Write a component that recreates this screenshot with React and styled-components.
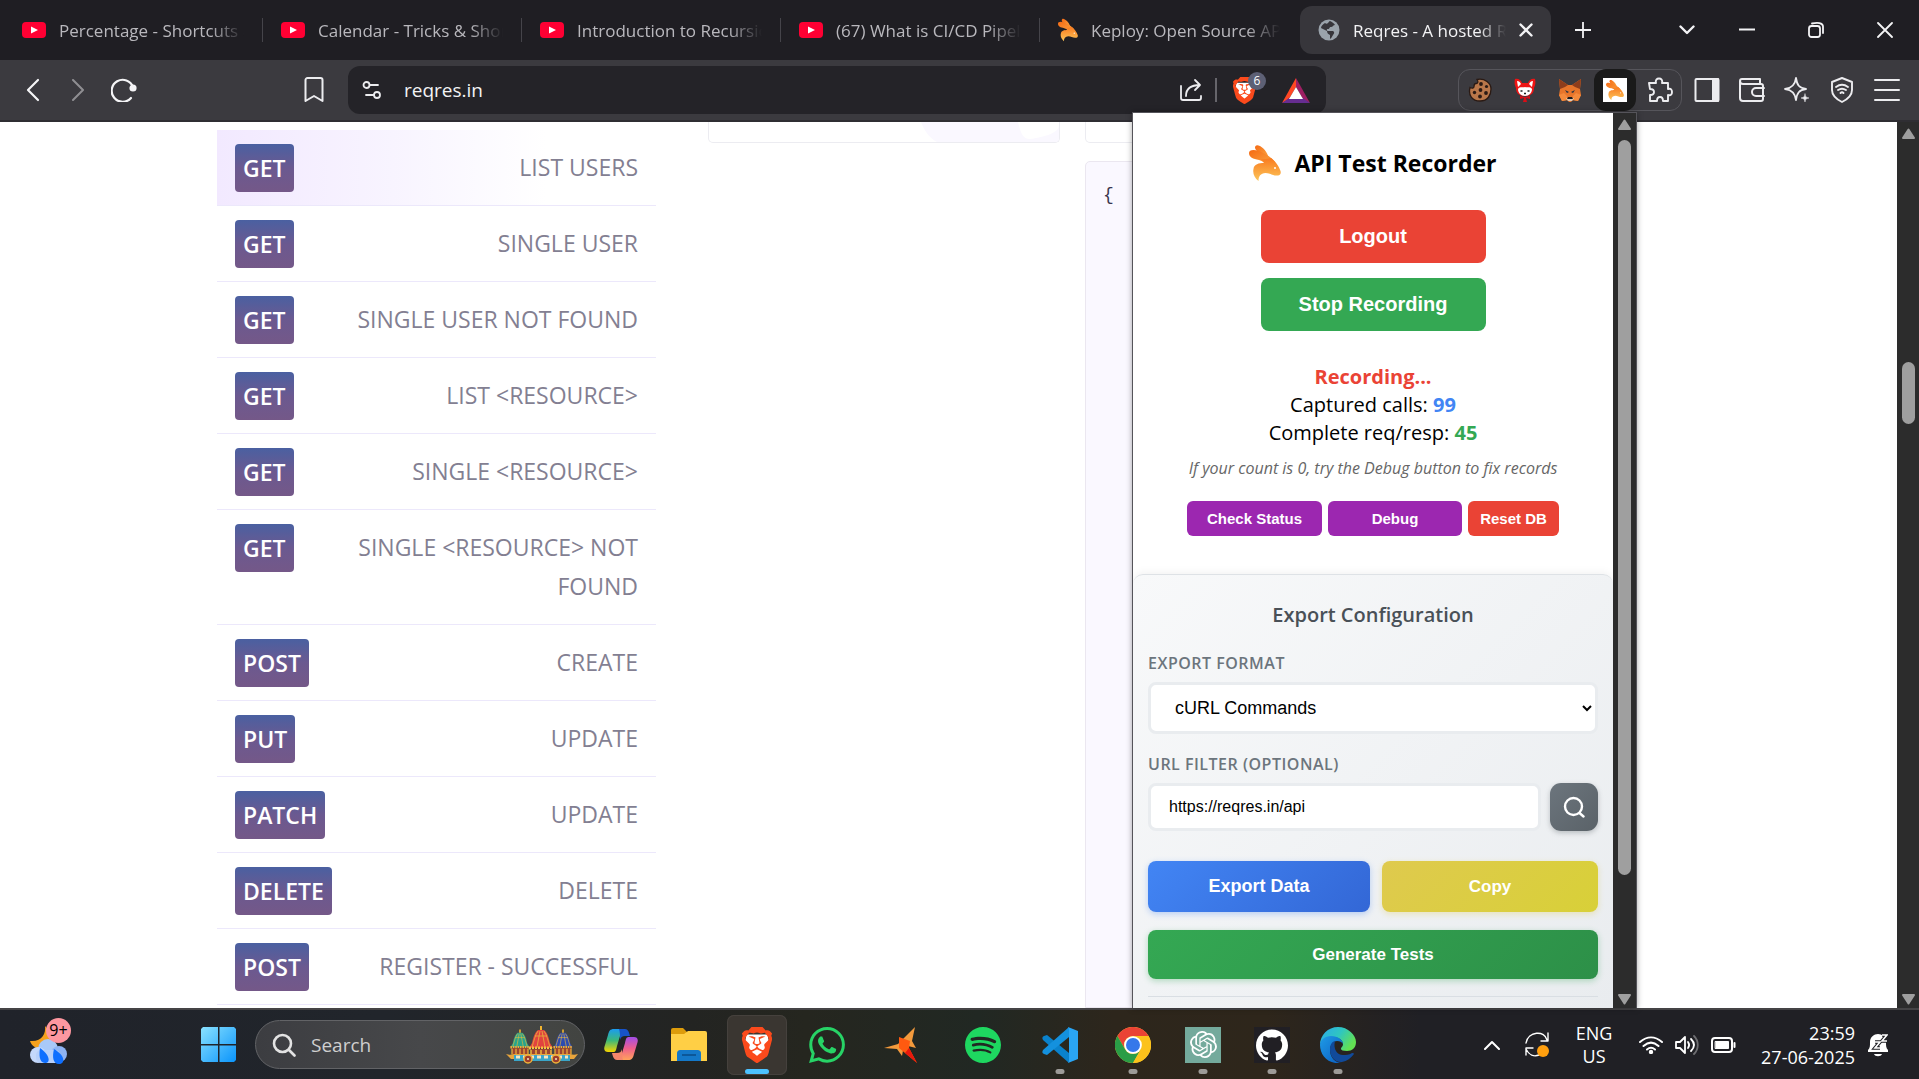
import React from "react";
import styled, { createGlobalStyle } from "styled-components";
import { SiBrave, SiOpenai, SiGithub, SiSpotify, SiWhatsapp } from "react-icons/si";

const ui = `"Segoe UI", "Open Sans", "Noto Sans", sans-serif`;
const arial = `Arial, "Liberation Sans", sans-serif`;

const GlobalStyle = createGlobalStyle`
  *, *::before, *::after { box-sizing: border-box; }
  body { margin: 0; font-family: ${ui}; background: #fff; overflow: hidden; }
  button, input, select { font: inherit; margin: 0; }
  button { border: 0; padding: 0; background: none; color: inherit; }
  svg { display: block; flex: none; }
  h1, h2, p, ul, pre { margin: 0; padding: 0; }
`;

/* ---------- shell ---------- */
const Desktop = styled.div`
  height: 100vh;
  display: flex;
  flex-direction: column;
`;
const Browser = styled.div`
  position: relative;
  flex: 1;
  min-height: 0;
  display: flex;
  flex-direction: column;
`;

/* ---------- tab strip ---------- */
const TabStrip = styled.header`
  height: 60px;
  flex: none;
  display: flex;
  align-items: center;
  padding-left: 4px;
  background: #1f1e23;
  color: #f3f3f5;
`;
const Tab = styled.button`
  width: 258px;
  height: 48px;
  display: flex;
  align-items: center;
  gap: 13px;
  padding: 0 18px;
  color: #b9b8bd;
  font-size: 17px;
  text-align: left;
`;
const TabDivider = styled.span`
  width: 1px;
  height: 24px;
  background: #45444a;
`;
const ActiveTab = styled.div`
  width: 251px;
  height: 48px;
  margin-left: 2px;
  display: flex;
  align-items: center;
  gap: 13px;
  padding: 0 18px;
  border-radius: 12px;
  background: #37363b;
  color: #f3f3f5;
  font-size: 17px;
`;
const TabTitle = styled.span`
  flex: 1;
  min-width: 0;
  overflow: hidden;
  white-space: nowrap;
  mask-image: linear-gradient(to right, #000 82%, transparent);
`;
const IconButton = styled.button`
  display: flex;
  align-items: center;
  justify-content: center;
`;
const NewTab = styled(IconButton)`
  width: 64px;
  height: 48px;
`;
const WindowControls = styled.div`
  margin-left: auto;
  display: flex;
`;
const WindowButton = styled(IconButton)`
  width: 69px;
  height: 48px;
`;
const TabMenu = styled(WindowButton)`
  width: 50px;
`;

/* ---------- toolbar ---------- */
const Toolbar = styled.nav`
  height: 62px;
  flex: none;
  display: flex;
  align-items: center;
  padding: 0 19px 0 21px;
  background: #3b3a3f;
  border-bottom: 2px solid #2f2e33;
  color: #ececef;
`;
const NavGroup = styled.div`
  display: flex;
  gap: 21px;
  color: #f5f5f7;
`;
const BookmarkButton = styled(IconButton)`
  margin: 0 24px 0 167px;
`;
const AddressBar = styled.div`
  flex: 0 1 978px;
  height: 48px;
  display: flex;
  align-items: center;
  padding: 0 16px 0 14px;
  border-radius: 12px;
  background: #242328;
`;
const Address = styled.input`
  flex: 1;
  min-width: 0;
  margin: 0 16px 0 22px;
  padding: 0;
  border: 0;
  outline: 0;
  background: transparent;
  color: #f3f3f5;
  font-size: 19px;
`;
const AddressDivider = styled.span`
  width: 2px;
  height: 24px;
  margin: 0 16px 0 12px;
  background: #66656b;
`;
const ShieldButton = styled(IconButton)`
  position: relative;
  margin-right: 26px;
`;
const ShieldBadge = styled.span`
  position: absolute;
  left: 15px;
  top: -5px;
  min-width: 18px;
  height: 18px;
  border-radius: 9px;
  background: #5d6075;
  color: #fff;
  font-size: 12px;
  line-height: 18px;
  text-align: center;
`;
const Extensions = styled.div`
  height: 42px;
  margin-left: auto;
  display: flex;
  align-items: center;
  gap: 3px;
  border: 1px solid #56555b;
  border-radius: 12px;
`;
const Extension = styled(IconButton)`
  width: 42px;
  height: 42px;
  border-radius: 12px;
  background: ${(p) => (p.$active ? "#1a1a1a" : "transparent")};
`;
const RabbitChip = styled.span`
  width: 24px;
  height: 24px;
  display: flex;
  align-items: center;
  justify-content: center;
  background: #fff;
`;
const ToolbarEnd = styled.div`
  display: flex;
  align-items: center;
  gap: 19px;
  margin-left: 12px;
`;

/* ---------- page ---------- */
const Page = styled.main`
  flex: 1;
  min-height: 0;
  display: flex;
  overflow: hidden;
  background: #fff;
`;
const PageBody = styled.div`
  flex: 1;
  min-width: 0;
  padding: 0 265px 0 217px;
  display: grid;
  grid-template-columns: 491fr 377fr 547fr;
`;
const EndpointList = styled.ul`
  list-style: none;
  margin-right: 52px;
  padding-top: 8px;
`;
const EndpointRow = styled.li`
  display: flex;
  justify-content: space-between;
  gap: 50px;
  padding: 18px;
  border-bottom: 1px solid #ece8fb;
  font-size: 23px;
  line-height: 39px;
  background: ${(p) => (p.$active ? "linear-gradient(90deg, #f2e9ff, #f8f4ff 40%, #fff 75%)" : "none")};
`;
const Method = styled.span`
  align-self: flex-start;
  margin: -4px 0 -5px;
  padding: 0 8px;
  border-radius: 4px;
  background: linear-gradient(#4a60a1, #6b5990 50%, #745888);
  color: #fff;
  font-weight: 600;
  line-height: 48px;
`;
const EndpointLink = styled.a`
  color: #837f92;
  text-align: right;
  text-decoration: none;
`;
const Outlined = styled.div`
  height: 21px;
  margin-right: ${(p) => (p.$gap ? "25px" : "0")};
  border: 1px solid #ececf1;
  border-top: 0;
  border-radius: 0 0 5px 5px;
  display: flex;
  justify-content: flex-end;
  overflow: hidden;
`;
const ResponseColumn = styled.div`
  display: flex;
  flex-direction: column;
  gap: 18px;
`;
const Response = styled.pre`
  flex: 1;
  padding: 20px 17px;
  border: 1px solid #ebe7f0;
  border-radius: 5px 5px 0 0;
  background: #faf8ff;
  color: #3a3650;
  font: 18px/26px "Liberation Mono", monospace;
`;

/* ---------- scroll bars ---------- */
const ScrollTrack = styled.div`
  width: ${(p) => p.$width}px;
  flex: none;
  display: flex;
  flex-direction: column;
  align-items: center;
  padding: 6px 0 3px;
  background: #2c2c2c;
`;
const ScrollLane = styled.div`
  flex: 1;
  margin: 9px 0;
  display: grid;
  grid-template-rows: ${(p) => p.$rows};
`;
const ScrollThumb = styled.div`
  grid-row: 2;
  width: 13px;
  border-radius: 7px;
  background: #9f9f9f;
`;

/* ---------- extension popup ---------- */
const Popup = styled.aside`
  position: absolute;
  top: 112px;
  right: 282px;
  bottom: 0;
  width: 505px;
  display: flex;
  border: 1px solid #55545a;
  border-bottom: 0;
  background: #fff;
  box-shadow: 0 0 6px rgba(0, 0, 0, 0.35);
`;
const PopupBody = styled.div`
  flex: 1;
  display: flex;
  flex-direction: column;
  overflow: hidden;
  color: #000;
`;
const Brand = styled.div`
  height: 37px;
  margin-top: 31px;
  display: flex;
  align-items: center;
  justify-content: center;
  gap: 13px;
`;
const BrandTitle = styled.h1`
  font-size: 23px;
  line-height: 32px;
  font-weight: 700;
`;
const MainActions = styled.div`
  margin-top: 29px;
  display: flex;
  flex-direction: column;
  align-items: center;
  gap: 15px;
`;
const PrimaryButton = styled.button`
  width: 225px;
  height: 53px;
  border-radius: 8px;
  background: ${(p) => p.$color};
  color: #fff;
  font: bold 20px ${arial};
`;
const Status = styled.div`
  margin-top: 32px;
  text-align: center;
  font-size: 20px;
  line-height: 28px;
`;
const Strong = styled.strong`
  color: ${(p) => p.$color};
`;
const Hint = styled.p`
  margin-top: 9px;
  color: #666;
  font-size: 16px;
  line-height: 24px;
  font-style: italic;
  text-align: center;
`;
const ToolButtons = styled.div`
  width: 372px;
  margin: 21px auto 38px;
  display: grid;
  grid-template-columns: 135fr 134fr 91fr;
  gap: 6px;
`;
const ToolButton = styled.button`
  height: 35px;
  border-radius: 6px;
  background: ${(p) => p.$color};
  color: #fff;
  font: bold 15px ${arial};
`;
const ExportSection = styled.section`
  flex: 1;
  display: flex;
  flex-direction: column;
  padding: 24px 15px 0;
  border-top: 1px solid #dee2e6;
  border-radius: 10px 10px 0 0;
  background: linear-gradient(135deg, #f8f9fa, #e9ecef);
  box-shadow: 0 -2px 8px rgba(0, 0, 0, 0.05);
`;
const SectionTitle = styled.h2`
  color: #495057;
  font-size: 20px;
  line-height: 32px;
  font-weight: 600;
  text-align: center;
`;
const FieldLabel = styled.label`
  margin-top: ${(p) => p.$top}px;
  color: #6c757d;
  font-size: 16px;
  line-height: 24px;
  font-weight: 600;
  letter-spacing: 0.5px;
`;
const FormatSelect = styled.select`
  height: 52px;
  margin-top: 7px;
  padding: 0 0 0 20px;
  border: 3px solid #e9ecef;
  border-radius: 8px;
  background: #fff;
  color: #000;
  font: 18px ${arial};
`;
const FilterRow = styled.div`
  margin-top: 7px;
  display: flex;
  gap: 9px;
`;
const FilterInput = styled.input`
  flex: 1;
  min-width: 0;
  height: 48px;
  padding: 0 18px;
  border: 3px solid #e9ecef;
  border-radius: 8px;
  background: #fff;
  color: #000;
  font: 16px ${arial};
`;
const SearchButton = styled(IconButton)`
  width: 48px;
  height: 48px;
  border-radius: 11px;
  background: linear-gradient(135deg, #6c757d, #5a6268);
  color: #fff;
  box-shadow: 0 2px 5px rgba(90, 98, 104, 0.35);
`;
const ExportActions = styled.div`
  margin: 30px 0 18px;
  display: grid;
  grid-template-columns: 222fr 216fr;
  gap: 12px;
`;
const GradientButton = styled.button`
  height: ${(p) => p.$height}px;
  border-radius: 8px;
  background: linear-gradient(135deg, ${(p) => p.$from}, ${(p) => p.$to});
  color: #fff;
  font: bold ${(p) => p.$size}px ${arial};
  box-shadow: 0 2px 6px ${(p) => p.$from}55;
`;
const SectionRule = styled.hr`
  width: 100%;
  margin: 17px 0 0;
  border: 0;
  border-top: 1px solid #d9dee3;
`;

/* ---------- taskbar ---------- */
const Taskbar = styled.footer`
  height: 71px;
  flex: none;
  display: flex;
  align-items: center;
  padding: 0 31px 0 30px;
  border-top: 2px solid #454446;
  background: linear-gradient(90deg, #20232a 0, #21252b 20%, #232422 36%, #25261f 42%, #212823 51%, #2d261c 58%, #2e261b 66%, #202025 74%);
  color: #fff;
`;
const Weather = styled(IconButton)`
  position: relative;
  width: 37px;
  height: 38px;
`;
const WeatherBadge = styled.span`
  position: absolute;
  left: 16px;
  top: -8px;
  width: 25px;
  height: 25px;
  border-radius: 50%;
  background: #fd97a0;
  color: #000;
  font-size: 16px;
  line-height: 25px;
  text-align: center;
`;
const StartButton = styled(IconButton)`
  margin: 0 19px 0 134px;
`;
const SearchBox = styled.label`
  width: 330px;
  height: 49px;
  display: flex;
  align-items: center;
  gap: 15px;
  padding: 0 6px 0 16px;
  border: 1px solid #626366;
  border-radius: 25px;
  background: linear-gradient(90deg, #3c3d41, #47484a 50%, #424441);
`;
const SearchInput = styled.input`
  flex: 1;
  min-width: 0;
  padding: 0;
  border: 0;
  outline: 0;
  background: transparent;
  font-size: 19px;
  &::placeholder { color: #cfcfcf; opacity: 1; }
`;
const AppRow = styled.div`
  display: flex;
  margin-left: 6px;
`;
const AppTile = styled.button`
  position: relative;
  width: 60px;
  height: 60px;
  margin-left: ${(p) => p.$gap}px;
  display: flex;
  align-items: center;
  justify-content: center;
  border-radius: 7px;
  background: ${(p) => (p.$focused ? "#3a3631" : "transparent")};
  box-shadow: ${(p) => (p.$focused ? "inset 0 0 0 1px #45413d" : "none")};
`;
const Running = styled.span`
  position: absolute;
  left: 50%;
  bottom: 1px;
  width: ${(p) => (p.$focused ? 24 : 9)}px;
  height: 5px;
  transform: translateX(-50%);
  border-radius: 3px;
  background: ${(p) => (p.$focused ? "#4cc2ff" : "#9d9b98")};
`;
const Tray = styled.div`
  margin-left: auto;
  display: flex;
  align-items: center;
  gap: 25px;
`;
const TrayIcons = styled.div`
  display: flex;
  align-items: center;
  gap: 12px;
`;
const Language = styled.div`
  width: 40px;
  font-size: 18px;
  line-height: 23px;
  text-align: center;
`;
const Clock = styled.div`
  display: flex;
  align-items: center;
  gap: 13px;
`;
const ClockText = styled.div`
  min-width: 92px;
  font-size: 18px;
  line-height: 24px;
  text-align: right;
  white-space: nowrap;
`;

/* ---------- drawings ---------- */
const Line = ({ w, h, box, sw = 2, children, ...rest }) => (
  <svg width={w} height={h} viewBox={box || `0 0 ${w} ${h}`} fill="none" stroke="currentColor" strokeWidth={sw} strokeLinecap="round" strokeLinejoin="round" aria-hidden="true" {...rest}>
    {children}
  </svg>
);
const Art = ({ w, h, box, children }) => (
  <svg width={w} height={h} viewBox={box || `0 0 ${w} ${h}`} aria-hidden="true">{children}</svg>
);
const YouTube = () => (
  <Art w={24} h={16}><rect width="24" height="16" rx="4" fill="#ff0033" /><path d="M9 4.500 16 8 9 11.500Z" fill="#fff" /></Art>
);
const Rabbit = ({ w, h, id }) => (
  <Art w={w} h={h} box="0 0 32 36">
    <defs><linearGradient id={id} x1="0" y1="0" x2="0" y2="1"><stop offset="0" stopColor="#f97a1f" /><stop offset="1" stopColor="#fcc65a" /></linearGradient>
      <linearGradient id={`${id}-e`} x1="0" y1="0" x2="1" y2="1"><stop offset="0" stopColor="#f56a14" /><stop offset="1" stopColor="#fbaa45" /></linearGradient></defs>
    <path d="M6 3C6 0 8-.5 11 1c5 3 8 8 9 13C15 11 7 7 6 3Z" fill={`url(#${id}-e)`} />
    <path d="M0 8C0 5 4 4 10 6c7 3 12 6 16 11l-9 3c-2-3-4-4-7-5C4 14 0 12 0 8Z" fill={`url(#${id}-e)`} />
    <path d="M15 18c-1-2-2-3-4-4 5 1 9-1 11-1 4 3 8 8 9.500 13 1 3.500-1 4.500-4 4.500-4 0-7-2.500-11-2.500-5 .5-7 3-7 8-4-3-6-8-5-12C5 19 10 18 15 18Z" fill={`url(#${id})`} />
    <circle cx="26" cy="23" r="1" fill="#fff" />
  </Art>
);
const Globe = () => (
  <Art w={22} h={22}><circle cx="11" cy="11" r="10.500" fill="#9aa3ab" /><path d="M12 2c2 1 4 2 5 4-2 0-2 2-4 2s-1 2-3 2-1 2 0 2h5c2 1 1 3 0 4s-1 3-3 4v-4c-2-1-3-2-3-4L3 9c0-2 2-4 4-5 1 1 2 1 3 0s1-2 2-2Z" fill="#37363b" /></Art>
);
const BraveShield = ({ w, h }) => (
  <svg width={w} height={h} viewBox="2 0 20 24" preserveAspectRatio="none" aria-hidden="true">
    <path d="M5 5h14l1 5-3 7-5 4-5-4-3-7Z" fill="#fff" />
    <SiBrave x="0" y="0" width="24" height="24" size={24} color="#fb4a1c" />
  </svg>
);
const Triangle = () => (
  <Art w={28} h={25}><path d="M14 0v9L7 21 0 25Z" fill="#ff4724" /><path d="M14 0v9l7 12 7 4Z" fill="#9e1f63" /><path d="M0 25l7-5h14l7 5Z" fill="#662d91" /><path d="M14 9l7 12H7Z" fill="#fff" /></Art>
);
const Cookie = () => (
  <Art w={24} h={24}><path d="M9 1.500c2 3 0 4-1 4s-2 1-2 3-2 2-4 1C0 17 4 23 12 23s11-6 11-12S17 0 9 1.500Z" fill="#b9774a" stroke="#2a1a14" strokeWidth="1.300" /><g fill="#2a1a14"><circle cx="13" cy="6" r="1.900" /><circle cx="18.500" cy="8.500" r="1.600" /><circle cx="12.500" cy="12" r="1.900" /><circle cx="18" cy="15" r="1.900" /><circle cx="12" cy="18.500" r="1.900" /><circle cx="6.500" cy="14.500" r="1.700" /></g></Art>
);
const RedFox = () => (
  <Art w={22} h={24}><path d="M1 1c3-1 6 1 7 4h6c1-3 4-5 7-4 1 4 0 7-1 9 0 6-4 8-9 8s-9-2-9-8C1 8 0 5 1 1Z" fill="#ee1414" /><path d="M3 3c2 0 3 1 4 3L4 9ZM19 3c-2 0-3 1-4 3l3 3Z" fill="#fff" /><path d="M4 11c2-3 5-1 7-2 2 1 5-1 7 2 0 4-3 7-7 7s-7-3-7-7Z" fill="#fff" /><path d="M6.500 13h2M13.500 13h2M10 15.500h2" stroke="#222" strokeWidth="1.400" /><path d="M6 18l5 1 5-1v3l-4-1 1 4H9l1-4-4 1Z" fill="#d90d16" /></Art>
);
const MetaFox = () => (
  <Art w={24} h={24}><path d="M1 1l9 6h4l9-6-1 10 1 6-3 6-5-1-2 2h-2l-2-2-5 1-3-6 1-6Z" fill="#e8752b" /><path d="M1 1l9 6-3 2-5 2ZM23 1l-9 6 3 2 5 2Z" fill="#8e3d1c" /><path d="M1 17l5-2 3 3 1 4-6 1ZM23 17l-5-2-3 3-1 4 6 1Z" fill="#f58a3c" /><path d="M7 12l4 2-2 1ZM17 12l-4 2 2 1Z" fill="#253345" /><path d="M8 20h8l-2 3h-4Z" fill="#d9c9ba" /><path d="M10 19h4l1 2H9Z" fill="#1d1a1c" /></Art>
);
const Arrow = ({ down }) => (
  <Art w={15} h={12}><path d={down ? "M2 2h11L7.500 10.500Z" : "M2 10h11L7.500 1.500Z"} fill="#9f9f9f" stroke="#9f9f9f" strokeWidth="2" strokeLinejoin="round" /></Art>
);
const Scrollbar = ({ width, rows }) => (
  <ScrollTrack $width={width} aria-hidden="true"><Arrow /><ScrollLane $rows={rows}><ScrollThumb /></ScrollLane><Arrow down /></ScrollTrack>
);
const WeatherArt = () => (
  <Art w={37} h={38}><path d="M15 0c1 8-3 16-15 15 2 6 8 9 14 7 6-3 8-8 6-16Z" fill="#f5a11d" /><circle cx="18" cy="23" r="10" fill="#a9c9f8" /><circle cx="8" cy="29" r="8" fill="#c4d8fb" /><circle cx="29" cy="28" r="8" fill="#8fb4f3" /><rect x="6" y="24" width="24" height="13" rx="5" fill="#b7d0fa" /><path d="M10 22c-1 6-1 15 5 15s5-8-5-15ZM24 23c-2 8-1 15 5 15s7-8-5-15Z" fill="#0f6fff" /></Art>
);
const WindowsArt = () => (
  <Art w={35} h={35}><defs><linearGradient id="win" x1="0" y1="0" x2="1" y2="1"><stop stopColor="#8ae2ff" /><stop offset="1" stopColor="#0a94fb" /></linearGradient></defs><path d="M2 0h15v17H0V2ZM18.500 0H33l2 2v15H18.500ZM0 18.500h17V35H2l-2-2ZM18.500 18.500H35V33l-2 2H18.500Z" fill="url(#win)" /></Art>
);
const Cart = ({ x, y, s, color, trim }) => (
  <g transform={`translate(${x} ${y}) scale(${s})`}>
    <path d="M0-3v5" stroke="#f3b52f" strokeWidth="2" />
    <path d="M-3 1h6c4 3 5 9 6 13l3 5h-24l3-5c1-4 2-10 6-13Z" fill={color} />
    <path d="M-3 2c-3 4-4 10-6 16M-1 2l-3 16M1 2l3 16M3 2c3 4 4 10 6 16M-6 7H6" stroke="#e7b53b" strokeWidth=".8" fill="none" />
    <path d="M-12 19h24" stroke={trim} strokeWidth="3" strokeDasharray="2 1" />
    <path d="M-10 20h20v8h-20Z" fill="#9b4530" /><path d="M-10 21v7M-5 21v7M0 21v7M5 21v7M10 21v7" stroke="#f0b43a" strokeWidth="1.500" />
  </g>
);
const TempleArt = () => (
  <Art w={72} h={38}>
    <Cart x={14} y={6} s={0.8} color="#27a58c" trim="#f0a93a" />
    <Cart x={57} y={6} s={0.8} color="#2c4bb0" trim="#f0a93a" />
    <Cart x={35} y={3} s={1} color="#e2433f" trim="#f5c443" />
    <path d="M0 28c3 1 5 1 8 0h56c3 1 5 1 8 0l-4 5H5Z" fill="#e8a53c" /><path d="M8 29h56v6H8Z" fill="#3aa5c8" /><path d="M10 31h52" stroke="#f7e5c0" strokeWidth="3" strokeDasharray="4 3" />
    {[22, 50].map((x) => <g key={x}><circle cx={x} cy="33" r="4" fill="#9c3d2d" stroke="#f0b43a" strokeWidth="1.500" /><circle cx={x} cy="33" r="1" fill="#f7e5c0" /></g>)}
  </Art>
);
const Copilot = () => (
  <Art w={34} h={31}>
    <defs><linearGradient id="c1" x1="0" y1="0" x2="0" y2="1"><stop stopColor="#1b9cf0" /><stop offset=".5" stopColor="#3cb879" /><stop offset="1" stopColor="#f6d400" /></linearGradient><linearGradient id="c2" x1="0" y1="0" x2="0" y2="1"><stop stopColor="#a24de8" /><stop offset=".5" stopColor="#ef5f8c" /><stop offset="1" stopColor="#ffa35a" /></linearGradient></defs>
    <path d="M18 0h-8C6 0 5 2 4 6L1 16c-2 5 0 7 3 7h5c3 0 3-2 4-6l3-10c1-3 2-3 4-3Z" fill="url(#c1)" />
    <path d="M15 0h6c3 0 4 3 5 7h-5c-3 0-4 1-5 4 0-5 0-8-1-11Z" fill="#1753c9" />
    <path d="M16 31h8c4 0 5-2 6-6l3-10c2-5 0-7-3-7h-5c-3 0-3 2-4 6l-3 10c-1 3-2 3-4 3Z" fill="url(#c2)" />
    <path d="M19 31h-6c-3 0-4-3-5-7h5c3 0 4-1 5-4 0 5 0 8 1 11Z" fill="#f5866c" />
  </Art>
);
const Folder = () => (
  <Art w={36} h={33}><path d="M0 2a2 2 0 0 1 2-2h10l4 4h18v8H0Z" fill="#dd9c0b" /><path d="M0 6h13l4-3h17a2 2 0 0 1 2 2v28H0Z" fill="#ffcf45" /><path d="M6 33v-7c0-3 1-4 4-4h16c3 0 4 1 4 4v7Z" fill="#1478c8" /><path d="M11 27h14" stroke="#0a4d88" strokeWidth="1.500" /></Art>
);
const Dart = () => (
  <Art w={34} h={36}><path d="M0 21l14-4L31 0l-3 14 4 7-12-3-2 11-5-7Z" fill="#f39a3c" /><path d="M15 10l11 4-1 7 8 15-12-10-6-5Z" fill="#ff5a10" /><path d="M25 21l8 15-12-10Z" fill="#e8180c" /></Art>
);
const VSCode = () => (
  <Art w={36} h={36}><path d="M2 9l3-1 22 18v10L1 13c-1-2-1-3 1-4Z" fill="#0a82cc" /><path d="M2 27l3 1L27 10V0L1 23c-1 2-1 3 1 4Z" fill="#1491de" /><path d="M26 0l10 4v28l-10 4c1-1 1-2 1-4V4c0-2 0-3-1-4Z" fill="#2aa5f4" /></Art>
);
const Chrome = () => (
  <Art w={36} h={36}><circle cx="18" cy="18" r="18" fill="#fcc934" /><path d="M2.400 9A18 18 0 0 1 33.600 9H18a9 9 0 0 0-7.800 13.500Z" fill="#ea4335" /><path d="M2.400 9l7.800 13.500A9 9 0 0 0 25.800 22.500L18 36A18 18 0 0 1 2.400 9Z" fill="#2a9d46" /><path d="M33.600 9H18a9 9 0 0 1 7.800 13.500L18 36A18 18 0 0 0 33.600 9Z" fill="#fcc21b" /><circle cx="18" cy="18" r="8.800" fill="#fff" /><circle cx="18" cy="18" r="7" fill="#3578ea" /></Art>
);
const IconTile = styled.span`
  width: 36px;
  height: 36px;
  display: flex;
  align-items: center;
  justify-content: center;
  background: ${(p) => p.$color};
`;
const Edge = () => (
  <Art w={36} h={36}><defs><linearGradient id="ed" x1="0" y1="0" x2="1" y2=".5"><stop stopColor="#2aa7ee" /><stop offset=".55" stopColor="#2fc6c0" /><stop offset="1" stopColor="#63e052" /></linearGradient><linearGradient id="eb" x1="0" y1="0" x2="1" y2="1"><stop stopColor="#1f9be6" /><stop offset="1" stopColor="#0a5cc0" /></linearGradient></defs>
    <path d="M0 18C0 8 8 0 18 0s18 8 18 15c0 6-4 9-9 9-4 0-6-1-6-2 0-2 2-2 2-5 0-4-5-7-10-7S1 13 0 18Z" fill="url(#ed)" /><path d="M0 18c0-5 5-9 11-9 7 0 12 4 12 8-1-2-3-3-6-3-4 0-7 4-7 9 0 7 5 13 12 13C8 38 0 28 0 18Z" fill="url(#eb)" /><path d="M15 14c-4 1-5 5-5 9 0 7 6 13 12 12 5-1 9-4 12-8 0-1-1-1-2-1-3 2-6 2-9 2-6 0-10-6-8-14Z" fill="#114a9a" /></Art>
);

const tabs = [
  ["youtube", "Percentage - Shortcuts & Tricks"],
  ["youtube", "Calendar - Tricks & Shortcuts"],
  ["youtube", "Introduction to Recursion"],
  ["youtube", "(67) What is CI/CD Pipeline"],
  ["keploy", "Keploy: Open Source API Testing"],
];
const endpoints = [
  ["GET", "LIST USERS"],
  ["GET", "SINGLE USER"],
  ["GET", "SINGLE USER NOT FOUND"],
  ["GET", "LIST <RESOURCE>"],
  ["GET", "SINGLE <RESOURCE>"],
  ["GET", "SINGLE <RESOURCE> NOT FOUND"],
  ["POST", "CREATE"],
  ["PUT", "UPDATE"],
  ["PATCH", "UPDATE"],
  ["DELETE", "DELETE"],
  ["POST", "REGISTER - SUCCESSFUL"],
];
const apps = [
  { name: "Copilot", gap: 0, icon: <Copilot /> },
  { name: "File Explorer", gap: 8, icon: <Folder /> },
  { name: "Brave", gap: 8, icon: <BraveShield w={30} h={36} />, focused: true },
  { name: "WhatsApp", gap: 10, icon: <SiWhatsapp size={36} color="#27d366" /> },
  { name: "Dart", gap: 14, icon: <Dart /> },
  { name: "Spotify", gap: 22, icon: <SiSpotify size={36} color="#1ed760" /> },
  { name: "Visual Studio Code", gap: 17, icon: <VSCode />, running: true },
  { name: "Chrome", gap: 13, icon: <Chrome />, running: true },
  { name: "ChatGPT", gap: 10, icon: <IconTile $color="#74aa9c"><SiOpenai size={27} color="#fff" /></IconTile>, running: true },
  { name: "GitHub", gap: 9, icon: <IconTile $color="#211f24"><SiGithub size={32} color="#fff" /></IconTile>, running: true },
  { name: "Edge", gap: 6, icon: <Edge />, running: true },
];

function BrowserTabs() {
  return (
    <TabStrip>
      {tabs.map(([icon, title]) => (
        <React.Fragment key={title}>
          <Tab>{icon === "youtube" ? <YouTube /> : <Rabbit w={20} h={24} id="tab-rabbit" />}<TabTitle>{title}</TabTitle></Tab>
          {icon === "youtube" && <TabDivider />}
        </React.Fragment>
      ))}
      <ActiveTab><Globe /><TabTitle>Reqres - A hosted REST-API</TabTitle>
        <IconButton aria-label="Close tab"><Line w={14} h={14} sw={2.4}><path d="M1.500 1.500l11 11M12.500 1.500l-11 11" /></Line></IconButton>
      </ActiveTab>
      <NewTab aria-label="New tab"><Line w={16} h={16} sw={1.800}><path d="M8 0v16M0 8h16" /></Line></NewTab>
      <WindowControls>
        <TabMenu aria-label="Tab list"><Line w={16} h={10} sw={2.400}><path d="M1.500 1.500L8 8l6.500-6.500" /></Line></TabMenu>
        <WindowButton aria-label="Minimize"><Line w={16} h={16} strokeLinecap="butt"><path d="M0 7.500h16" /></Line></WindowButton>
        <WindowButton aria-label="Restore"><Line w={16} h={16} sw={1.800}><rect x="1" y="4" width="11" height="11" rx="2.500" /><path d="M4 1.500c5-1 11-1 11 3V11" /></Line></WindowButton>
        <WindowButton aria-label="Close"><Line w={16} h={16} sw={1.800}><path d="M1 1l14 14M15 1L1 15" /></Line></WindowButton>
      </WindowControls>
    </TabStrip>
  );
}

function BrowserToolbar() {
  return (
    <Toolbar>
      <NavGroup>
        <IconButton aria-label="Back"><Line w={24} h={24} sw={2.200}><path d="M17 2L7 12l10 10" /></Line></IconButton>
        <IconButton aria-label="Forward"><Line w={24} h={24} opacity=".45"><path d="M7 2l10 10L7 22" /></Line></IconButton>
        <IconButton aria-label="Reload"><Line w={26} h={24} sw={2.200}><path d="M22 9A11 11 0 1 0 20 20" /><circle cx="22" cy="10" r="2.500" fill="currentColor" /></Line></IconButton>
      </NavGroup>
      <BookmarkButton aria-label="Bookmark"><Line w={20} h={26}><path d="M1.500 3a2 2 0 0 1 2-2h13a2 2 0 0 1 2 2v21L10 19l-8.500 5Z" /></Line></BookmarkButton>
      <AddressBar>
        <Line w={20} h={18} sw={1.800}><circle cx="4.500" cy="4" r="3" /><path d="M8 4h8M4 14h8" /><circle cx="15" cy="14" r="3" /></Line>
        <Address aria-label="Address" defaultValue="reqres.in" />
        <IconButton aria-label="Share"><Line w={24} h={24} sw={1.800}><path d="M2 8v12a2 2 0 0 0 2 2h16a2 2 0 0 0 2-2v-2M7 18c0-7 5-11 14-11M16 2l5 5-5 5" /></Line></IconButton>
        <AddressDivider />
        <ShieldButton aria-label="Shields"><BraveShield w={23} h={27} /><ShieldBadge>6</ShieldBadge></ShieldButton>
        <IconButton aria-label="Rewards"><Triangle /></IconButton>
      </AddressBar>
      <Extensions>
        <Extension aria-label="Cookies"><Cookie /></Extension>
        <Extension aria-label="Fox"><RedFox /></Extension>
        <Extension aria-label="MetaMask"><MetaFox /></Extension>
        <Extension $active aria-label="API Test Recorder"><RabbitChip><Rabbit w={18} h={22} id="chip-rabbit" /></RabbitChip></Extension>
        <Extension aria-label="Extensions"><Line w={26} h={26} sw={1.900}><path d="M2 6h7c-1-3 1-4.500 3-4.500S16 3 15 6h6v6c3-1 4 1 4 3s-1 4-4 3v6h-5c0-3-1-4-3-4s-3 1-3 4H3v-6c3 0 4-1 4-3s-2-3-4-3Z" /></Line></Extension>
      </Extensions>
      <ToolbarEnd>
        <IconButton aria-label="Sidebar"><Line w={26} h={24}><rect x="1.500" y="1" width="23" height="22" rx="1" /><path d="M19 1h5v22h-5Z" fill="currentColor" /></Line></IconButton>
        <IconButton aria-label="Wallet"><Line w={26} h={24}><path d="M1 3v17a3 3 0 0 0 3 3h18a2 2 0 0 0 2-2V8a2 2 0 0 0-2-2H4a3 3 0 0 1-3-3 2 2 0 0 1 2-2h18v5M25 10h-8a3.500 3.500 0 0 0 0 8h8" /></Line></IconButton>
        <IconButton aria-label="Leo AI"><Line w={26} h={26} sw={1.800}><path d="M12 1c1 7 3 10 10 11-7 1-9 4-10 11-1-7-4-10-11-11 7-1 10-4 11-11Z" /><path d="M21 17c.5 3 1 3.500 4 4-3 .5-3.500 1-4 4-.5-3-1-3.500-4-4 3-.5 3.500-1 4-4Z" fill="currentColor" strokeWidth=".5" /></Line></IconButton>
        <IconButton aria-label="VPN"><Line w={26} h={26} box="-1 0 26 26" sw={1.900}><path d="M12 1l10 4v8c0 5-4 9-10 12C6 22 2 18 2 13V5Z" /><path d="M6 10c4-3 8-3 12 0M8 13c3-2 5-2 8 0M10.500 16c1-1 2-1 3 0" /></Line></IconButton>
        <IconButton aria-label="Menu"><Line w={26} h={24}><path d="M1 2h24M1 12h24M1 22h24" /></Line></IconButton>
      </ToolbarEnd>
    </Toolbar>
  );
}

function RecorderPopup() {
  return (
    <Popup>
      <PopupBody>
        <Brand><Rabbit w={32} h={36} id="brand-rabbit" /><BrandTitle>API Test Recorder</BrandTitle></Brand>
        <MainActions>
          <PrimaryButton $color="#ea4335">Logout</PrimaryButton>
          <PrimaryButton $color="#34a853">Stop Recording</PrimaryButton>
        </MainActions>
        <Status>
          <div><Strong $color="#ea4335">Recording...</Strong></div>
          <div>Captured calls: <Strong $color="#4285f4">99</Strong></div>
          <div>Complete req/resp: <Strong $color="#34a853">45</Strong></div>
        </Status>
        <Hint>If your count is 0, try the Debug button to fix records</Hint>
        <ToolButtons>
          <ToolButton $color="#9c27b0">Check Status</ToolButton>
          <ToolButton $color="#9c27b0">Debug</ToolButton>
          <ToolButton $color="#ea4335">Reset DB</ToolButton>
        </ToolButtons>
        <ExportSection>
          <SectionTitle>Export Configuration</SectionTitle>
          <FieldLabel $top={20} htmlFor="format">EXPORT FORMAT</FieldLabel>
          <FormatSelect id="format"><option>cURL Commands</option></FormatSelect>
          <FieldLabel $top={18} htmlFor="filter">URL FILTER (OPTIONAL)</FieldLabel>
          <FilterRow>
            <FilterInput id="filter" defaultValue="https://reqres.in/api" />
            <SearchButton aria-label="Search"><Line w={22} h={22} sw={2.400}><circle cx="10.500" cy="10.500" r="8.500" /><path d="M16.500 17l4 3.500" /></Line></SearchButton>
          </FilterRow>
          <ExportActions>
            <GradientButton $height={51} $size={18} $from="#4285f4" $to="#3367d6">Export Data</GradientButton>
            <GradientButton $height={51} $size={17} $from="#dfca4e" $to="#d8d038">Copy</GradientButton>
          </ExportActions>
          <GradientButton $height={49} $size={17} $from="#34a853" $to="#2d9048">Generate Tests</GradientButton>
          <SectionRule />
        </ExportSection>
      </PopupBody>
      <Scrollbar width={23} rows="0fr 736fr 109fr" />
    </Popup>
  );
}

function SystemTaskbar() {
  return (
    <Taskbar>
      <Weather aria-label="Weather"><WeatherArt /><WeatherBadge>9+</WeatherBadge></Weather>
      <StartButton aria-label="Start"><WindowsArt /></StartButton>
      <SearchBox>
        <Line w={24} h={24} sw={2.600} color="#e3e3e3"><circle cx="10.500" cy="10.500" r="8.500" /><path d="M17 17l5.500 5.500" /></Line>
        <SearchInput aria-label="Search" placeholder="Search" />
        <TempleArt />
      </SearchBox>
      <AppRow>
        {apps.map((a) => (
          <AppTile key={a.name} aria-label={a.name} $gap={a.gap} $focused={a.focused}>
            {a.icon}
            {(a.focused || a.running) && <Running $focused={a.focused} />}
          </AppTile>
        ))}
      </AppRow>
      <Tray>
        <IconButton aria-label="Hidden icons"><Line w={16} h={10}><path d="M1 9l7-7 7 7" /></Line></IconButton>
        <IconButton aria-label="Updates"><Line w={24} h={26} sw={1.400}><path d="M1 11C3-1 20-2 22 8M23 1v8h-7M1 23v-7h7M1 17c3 6 8 8 13 6" /><circle cx="18" cy="19" r="6" fill="#ff9f0f" stroke="none" /></Line></IconButton>
        <Language>ENG US</Language>
        <TrayIcons>
          <Line w={24} h={18}><path d="M1 6c7-6 15-6 22 0M4.500 10c5-4.500 10-4.500 15 0M8 13.500c3-2.500 5-2.500 8 0" /><circle cx="12" cy="16" r="1.200" fill="currentColor" /></Line>
          <Line w={24} h={20} sw={1.800}><path d="M1 7h4l5-5v16l-5-5H1ZM13 7c1.500 2 1.500 4 0 6M16 4c4 4 4 8 0 12" /><path d="M19 1c5 5 5 13 0 18" opacity=".35" /></Line>
          <Line w={25} h={16}><rect x="1" y="1" width="20" height="14" rx="3" /><rect x="4.500" y="4.500" width="13" height="7" fill="currentColor" strokeWidth="1" /><path d="M23.500 6v4" /></Line>
        </TrayIcons>
        <Clock>
          <ClockText>23:59<br />27-06-2025</ClockText>
          <Art w={20} h={24}><path d="M0 17c2-2 2-4 2-8 0-5 4-8 8-8s8 3 8 8c0 4 0 6 2 8v2H0ZM6 21h8c-1 3-7 3-8 0Z" fill="#fff" /><path d="M7 9h5l-5 6h5M14 2h5l-5 6h5" fill="none" stroke="#202025" strokeWidth="3.600" /><path d="M7 9h5l-5 6h5M14 2h5l-5 6h5" fill="none" stroke="#fff" strokeWidth="1.600" /></Art>
        </Clock>
      </Tray>
    </Taskbar>
  );
}

export default function App() {
  return (
    <>
      <GlobalStyle />
      <Desktop>
        <Browser>
          <BrowserTabs />
          <BrowserToolbar />
          <Page>
            <PageBody>
              <EndpointList>
                {endpoints.map(([method, label], i) => (
                  <EndpointRow key={i} $active={i === 0}>
                    <Method>{method}</Method>
                    <EndpointLink href="#endpoint">{label}</EndpointLink>
                  </EndpointRow>
                ))}
              </EndpointList>
              <Outlined $gap>
                <Art w={138} h={20}><path d="M0 0h97c4 18 8 18 18 16s22-5 23-12v16H16C8 16 3 8 0 0Z" fill="#faf8ff" /></Art>
              </Outlined>
              <ResponseColumn>
                <Outlined />
                <Response>{"{"}</Response>
              </ResponseColumn>
            </PageBody>
            <Scrollbar width={22} rows="214fr 63fr 563fr" />
          </Page>
          <RecorderPopup />
        </Browser>
        <SystemTaskbar />
      </Desktop>
    </>
  );
}
